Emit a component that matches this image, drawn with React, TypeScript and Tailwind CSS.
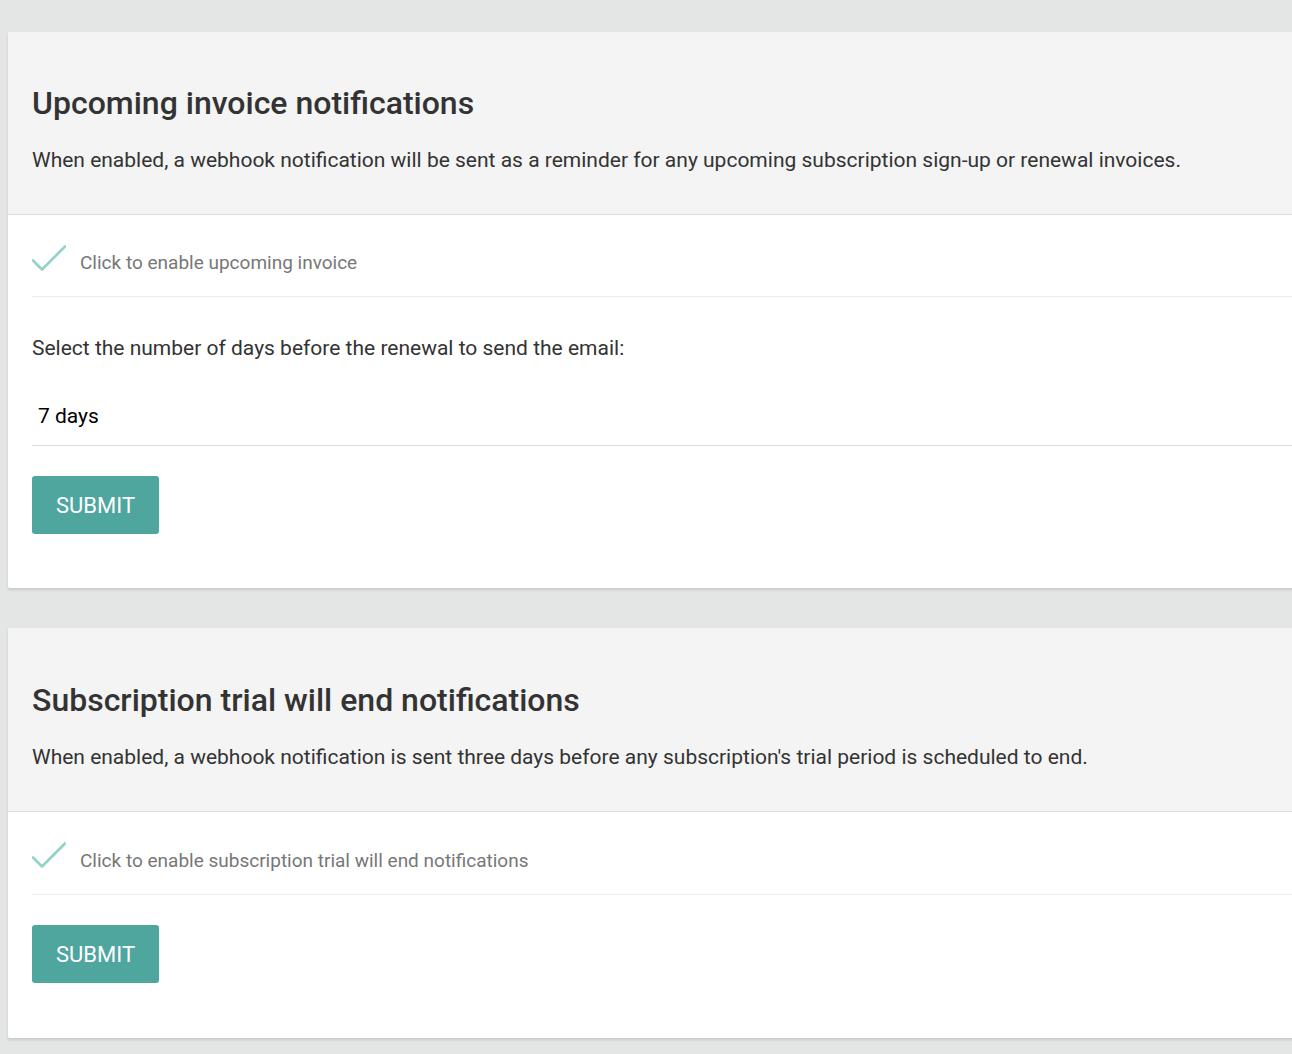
import React from "react";

const FONT = { fontFamily: "Roboto, 'Noto Sans', sans-serif" };

function Check() {
  return (
    <svg width="34" height="28" viewBox="0 0 34 28" fill="none" className="shrink-0">
      <path d="M1 15.5 L10 24.5 L33 1.5" stroke="#93d2c9" strokeWidth="2.6" strokeLinecap="round" strokeLinejoin="round" />
    </svg>
  );
}

function CheckRow({ label, tall }: { label: string; tall?: boolean }) {
  return (
    <div
      className={
        tall
          ? "flex h-[83px] items-center gap-[14px] border-b border-[#ebebeb] pt-4"
          : "flex h-[82px] items-center gap-[14px] border-b border-[#ebebeb] pt-4"
      }
    >
      <div className="-mt-[10px]">
        <Check />
      </div>
      <span className="text-[19px] text-[#777]">{label}</span>
    </div>
  );
}

function SubmitButton() {
  return (
    <button className="h-[58px] w-[127px] rounded-[3px] bg-[#4ea69f] text-[22px] text-white">SUBMIT</button>
  );
}

function Card({
  title,
  description,
  tall,
  children,
}: {
  title: string;
  description: string;
  tall?: boolean;
  children: React.ReactNode;
}) {
  return (
    <section className="-mr-6 ml-2 rounded-[2px] bg-white shadow-[0_2px_3px_rgba(0,0,0,0.12)]">
      <header
        className={
          tall
            ? "h-[184px] border-b border-[#dcdcdc] bg-[#f4f4f4] px-6 pt-[54px]"
            : "h-[183px] border-b border-[#dcdcdc] bg-[#f4f4f4] px-6 pt-[53px]"
        }
      >
        <h2 className="text-[32px] font-medium leading-9 text-[#333]">{title}</h2>
        <p className="mt-[25px] text-[21px] leading-7 text-[#333]">{description}</p>
      </header>
      <div className="pl-6">{children}</div>
    </section>
  );
}

export default function App() {
  return (
    <div style={FONT} className="min-h-[1054px] overflow-hidden bg-[#e4e6e5] pt-8">
      <Card
        title="Upcoming invoice notifications"
        description="When enabled, a webhook notification will be sent as a reminder for any upcoming subscription sign-up or renewal invoices."
      >
        <CheckRow label="Click to enable upcoming invoice" />
        <p className="mt-[37px] text-[21px] leading-7 text-[#333]">
          Select the number of days before the renewal to send the email:
        </p>
        <div className="mt-[28px] flex h-[56px] items-center border-b border-[#dcdcdc] pb-[2px] pl-[6px] text-[21px] text-black">
          7 days
        </div>
        <div className="pt-[30px] pb-[54px]">
          <SubmitButton />
        </div>
      </Card>
      <div className="h-10" />
      <Card
        tall
        title="Subscription trial will end notifications"
        description="When enabled, a webhook notification is sent three days before any subscription's trial period is scheduled to end."
      >
        <CheckRow tall label="Click to enable subscription trial will end notifications" />
        <div className="pt-[30px] pb-[55px]">
          <SubmitButton />
        </div>
      </Card>
    </div>
  );
}
